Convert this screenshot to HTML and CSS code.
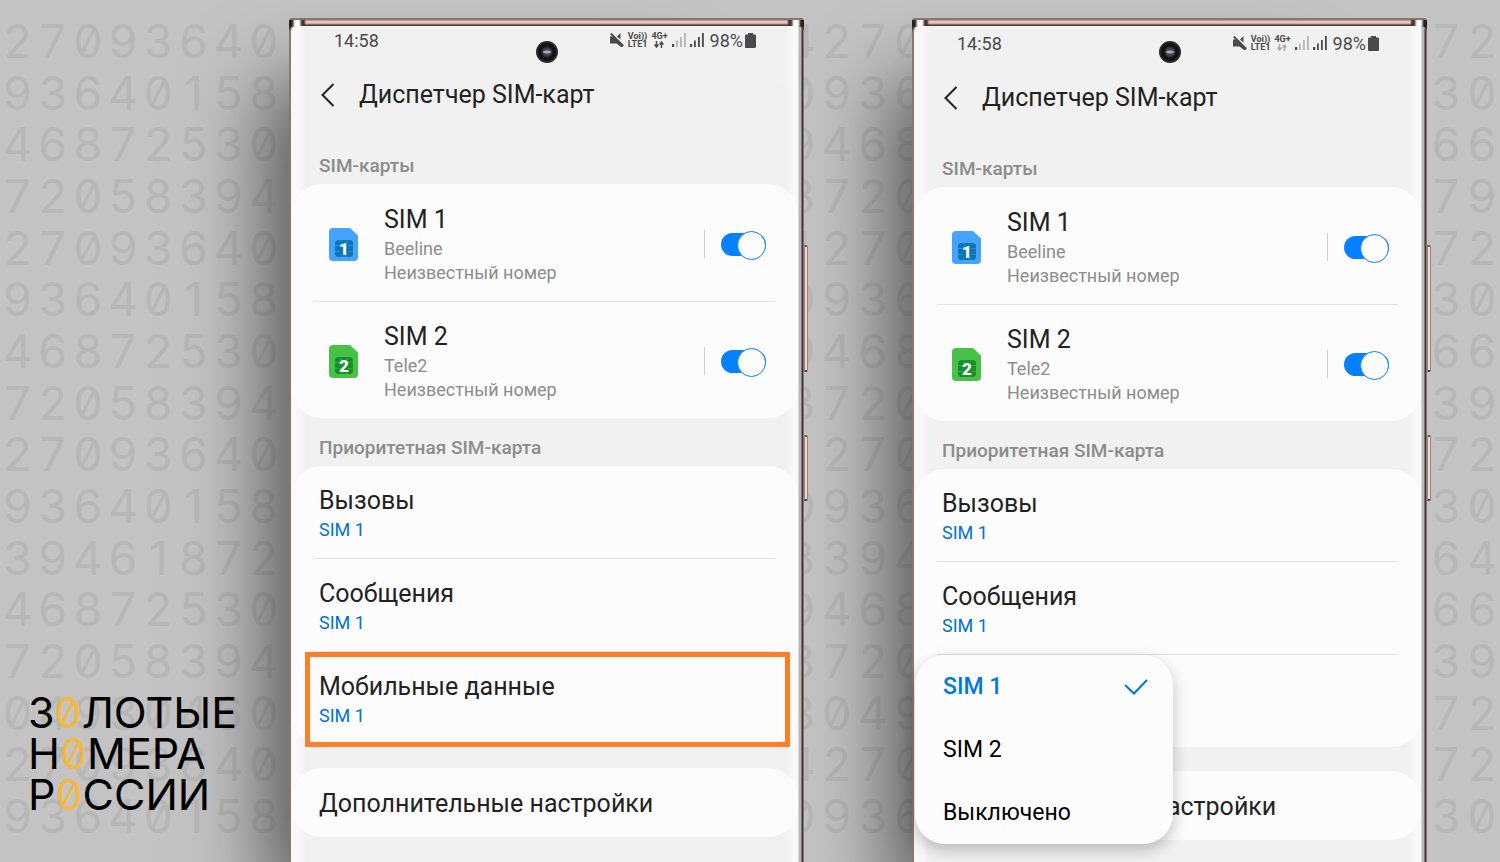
FILE: index.html
```html
<!DOCTYPE html>
<html lang="ru">
<head>
  <meta charset="UTF-8">
  <meta name="viewport" content="width=device-width, initial-scale=1.0">
  <title>Диспетчер SIM-карт</title>
  <link rel="stylesheet" href="styles.css">
</head>
<body>
  <!-- Shared icons -->
  <svg class="defs" aria-hidden="true">
    <symbol id="mute" viewBox="0 0 14 14">
      <path d="M0 3.500h3L12.500 12v2H11L6.500 10.500H0zM7 3.500L10.500 0v6.500z" fill="currentColor"/>
      <path d="M0.800 0.500L13.300 13" stroke="currentColor" stroke-width="1.900"/>
    </symbol>
    <symbol id="signal" viewBox="0 0 14 14">
      <path d="M0 11h2.200V14H0z"/>
      <path class="bars" d="M4 7.500h1.800V14H4zM8 4h1.800V14H8zM12 0h1.800v14H12z"/>
    </symbol>
    <symbol id="arrows" viewBox="0 0 10 7">
      <path d="M2.500 0v5.500M0.500 3.500l2 2.500 2-2.500M7.500 7V1.500M5.500 3.500l2-2.500 2 2.500" fill="none" stroke="currentColor" stroke-width="1.500"/>
    </symbol>
    <symbol id="battery" viewBox="0 0 11 15">
      <path d="M3 0h5v1.500h2q1 0 1 1V14q0 1-1 1H1q-1 0-1-1V2.500q0-1 1-1h2z" fill="currentColor"/>
    </symbol>
    <symbol id="back" viewBox="0 0 14 24">
      <path d="M12.500 1L1.500 12l11 11" fill="none" stroke="#222" stroke-width="2"/>
    </symbol>
    <symbol id="sim" viewBox="0 0 29 33">
      <path d="M4 0h17l8 7.500V29q0 4-4 4H4q-4 0-4-4V4q0-4 4-4z" fill="currentColor"/>
      <rect class="chip" x="6" y="12" width="18" height="17" rx="3.500"/>
      <path d="M6 17.500h5M6 23.500h5M19 17.500h5M19 23.500h5M12 12v3M18 12v3M12 26v3M18 26v3" stroke="currentColor" stroke-width="0.500"/>
    </symbol>
  </svg>

  <div class="digits" aria-hidden="true">
    <div class="strip strip-left" data-rows="27093640 93640158 46872530 72058394 27093640 93640158 46872530 72058394 27093640 93640158 39461872 46872530 72058394 04930460 27093640 93640158"></div>
    <div class="strip strip-middle" data-rows="4270 0936 9468 8720 1270 0936 9468 8720 1270 0936 8394 9468 8720 3049 4270 0936"></div>
    <div class="strip strip-right" data-rows="72 30 66 79 72 30 66 39 72 30 64 66 39 72 72 30"></div>
  </div>

  <main class="stage">
    <p class="logo">З<b>0</b>ЛОТЫЕ<br>Н<b>0</b>МЕРА<br>Р<b>0</b>ССИИ</p>

    <section class="phone phone-first">
      <div class="frame-top"></div>
      <div class="camera"></div>
      <div class="screen">
        <div class="status">
          <span class="time">14:58</span>
          <svg class="icon-mute"><use href="#mute"/></svg>
          <span class="tiny">Voi))<br>LTE1</span>
          <span class="tiny">4G+<svg class="icon-arrows"><use href="#arrows"/></svg></span>
          <svg class="icon-signal weak"><use href="#signal"/></svg>
          <svg class="icon-signal"><use href="#signal"/></svg>
          <span class="charge">98%<svg class="icon-battery"><use href="#battery"/></svg></span>
        </div>
        <header class="title-bar">
          <button class="back" aria-label="Назад"><svg><use href="#back"/></svg></button>
          <h1>Диспетчер SIM-карт</h1>
        </header>

        <h2>SIM-карты</h2>
        <div class="card">
          <div class="row sim-row">
            <span class="sim-icon blue"><svg><use href="#sim"/></svg><b>1</b></span>
            <label class="sim-text" for="a-sim1">
              <span class="name">SIM 1</span>
              <span class="sub">Beeline</span>
              <span class="sub">Неизвестный номер</span>
            </label>
            <span class="line"></span>
            <input type="checkbox" class="toggle" id="a-sim1" checked>
          </div>
          <div class="row sim-row">
            <span class="sim-icon green"><svg><use href="#sim"/></svg><b>2</b></span>
            <label class="sim-text" for="a-sim2">
              <span class="name">SIM 2</span>
              <span class="sub">Tele2</span>
              <span class="sub">Неизвестный номер</span>
            </label>
            <span class="line"></span>
            <input type="checkbox" class="toggle" id="a-sim2" checked>
          </div>
        </div>

        <h2>Приоритетная SIM-карта</h2>
        <div class="card">
          <button class="row"><span class="name">Вызовы</span><span class="value">SIM 1</span></button>
          <button class="row"><span class="name">Сообщения</span><span class="value">SIM 1</span></button>
          <button class="row marked"><span class="name">Мобильные данные</span><span class="value">SIM 1</span></button>
        </div>

        <div class="card more">
          <button class="row"><span class="name">Дополнительные настройки</span></button>
        </div>
      </div>
      <i class="key key-volume"></i>
      <i class="key key-power"></i>
    </section>

    <section class="phone phone-second">
      <div class="frame-top"></div>
      <div class="camera"></div>
      <div class="screen">
        <div class="status">
          <span class="time">14:58</span>
          <svg class="icon-mute"><use href="#mute"/></svg>
          <span class="tiny">Voi))<br>LTE1</span>
          <span class="tiny">4G+<svg class="icon-arrows idle"><use href="#arrows"/></svg></span>
          <svg class="icon-signal weak"><use href="#signal"/></svg>
          <svg class="icon-signal"><use href="#signal"/></svg>
          <span class="charge">98%<svg class="icon-battery"><use href="#battery"/></svg></span>
        </div>
        <header class="title-bar">
          <button class="back" aria-label="Назад"><svg><use href="#back"/></svg></button>
          <h1>Диспетчер SIM-карт</h1>
        </header>

        <h2>SIM-карты</h2>
        <div class="card">
          <div class="row sim-row">
            <span class="sim-icon blue"><svg><use href="#sim"/></svg><b>1</b></span>
            <label class="sim-text" for="b-sim1">
              <span class="name">SIM 1</span>
              <span class="sub">Beeline</span>
              <span class="sub">Неизвестный номер</span>
            </label>
            <span class="line"></span>
            <input type="checkbox" class="toggle" id="b-sim1" checked>
          </div>
          <div class="row sim-row">
            <span class="sim-icon green"><svg><use href="#sim"/></svg><b>2</b></span>
            <label class="sim-text" for="b-sim2">
              <span class="name">SIM 2</span>
              <span class="sub">Tele2</span>
              <span class="sub">Неизвестный номер</span>
            </label>
            <span class="line"></span>
            <input type="checkbox" class="toggle" id="b-sim2" checked>
          </div>
        </div>

        <h2>Приоритетная SIM-карта</h2>
        <div class="card">
          <button class="row"><span class="name">Вызовы</span><span class="value">SIM 1</span></button>
          <button class="row"><span class="name">Сообщения</span><span class="value">SIM 1</span></button>
          <div class="menu-anchor">
            <button class="row empty" aria-label="Мобильные данные"></button>
            <div class="menu" role="listbox">
              <button class="selected" role="option" aria-selected="true">SIM 1
                <svg viewBox="0 0 24 16"><path d="M1 6l9 8.500L23 1" fill="none" stroke="currentColor" stroke-width="2"/></svg>
              </button>
              <button role="option">SIM 2</button>
              <button role="option">Выключено</button>
            </div>
          </div>
        </div>

        <div class="card more">
          <button class="row"><span class="name">Дополнительные настройки</span></button>
        </div>
      </div>
      <i class="key key-volume"></i>
      <i class="key key-power"></i>
    </section>
  </main>

  <script>
    // Fill the background strips, one cell per digit
    document.querySelectorAll('.strip').forEach(strip => {
      strip.dataset.rows.split(' ').join('').split('').forEach(digit => {
        const cell = document.createElement('span');
        cell.textContent = digit;
        strip.appendChild(cell);
      });
    });
  </script>
</body>
</html>
```
FILE: styles.css
```css
* {
  box-sizing: border-box;
}

body {
  margin: 0;
  position: relative;
  min-height: 100vh;
  background-color: #c3c3c3;
  font-family: Roboto, "Liberation Sans", sans-serif;
  color: #222;
}

button {
  margin: 0;
  padding: 0;
  border: none;
  background: none;
  font-family: inherit;
  color: inherit;
  text-align: left;
  cursor: pointer;
}

.defs {
  position: absolute;
  width: 0;
  height: 0;
}

.stage, .digits {
  display: grid;
  grid-template-columns: 289fr 515fr 108fr 515fr 73fr;
}

.stage {
  position: relative;
  min-height: 100vh;
  overflow: hidden;
}

/* Background digits */
.digits {
  position: absolute;
  inset: 0;
  padding: 15px 0 20px;
  overflow: hidden;
  color: #b7b7b7;
  font-family: Inter, "Liberation Sans", sans-serif;
  font-feature-settings: "zero";
  font-size: 46px;
  line-height: 1;
}

.strip {
  display: grid;
  grid-auto-rows: 1fr;
  place-items: center;
  justify-content: center;
}

.strip-left {
  grid-column: 1;
  grid-template-columns: repeat(8, 1fr);
  justify-content: stretch;
}

.strip-middle {
  grid-column: 3;
  grid-template-columns: repeat(4, 36px);
}

.strip-right {
  grid-column: 5;
  grid-template-columns: repeat(2, 36px);
}

.logo {
  grid-column: 1;
  align-self: end;
  margin: 0 0 47px 28px;
  font-family: Inter, "Liberation Sans", sans-serif;
  font-feature-settings: "zero";
  font-size: 43px;
  line-height: 41px;
  color: #000;
  white-space: nowrap;
}

.logo b {
  font-weight: 400;
  color: #f2b844;
}

/* Phone body */
.phone {
  position: relative;
  display: flex;
  flex-direction: column;
  margin-top: 18px;
  border-radius: 4px 4px 0 0;
  background-color: #3a3030;
}

.phone-first {
  grid-column: 2;
}

.phone-second {
  grid-column: 4;
}

.phone::before {
  content: "";
  position: absolute;
  inset: 24px 120px 0 0;
  box-shadow: -22px 40px 76px rgba(0, 0, 0, 0.56);
}

.frame-top {
  position: relative;
  height: 8px;
  border-radius: 4px 4px 0 0;
  background:
    linear-gradient(90deg, #222 0 3px, #fff 6px 10px, #433 13px 15px, transparent 17px calc(100% - 17px), #433 calc(100% - 15px) calc(100% - 13px), #fff calc(100% - 10px) calc(100% - 6px), #222 calc(100% - 3px)) 0 2px / 100% 6px no-repeat,
    linear-gradient(#8d736d 0 2px, #e3c6bd 3px 5px, #b4948c 6px, #4b3f3e 7px);
}

.camera {
  position: absolute;
  z-index: 1;
  top: 23px;
  left: 50%;
  width: 22px;
  height: 22px;
  margin-left: -11px;
  border-radius: 50%;
  background: radial-gradient(ellipse 5px 2px at 50% 50%, #aab 0 50%, transparent), radial-gradient(circle, #433f50 0 4px, #111 6px 8px, #2c2a30 10px);
}

.screen {
  position: relative;
  flex: 1;
  border-style: solid;
  border-width: 0 1px 0 2px;
  border-color: #8a7672;
  border-radius: 6px 6px 0 0;
  padding: 0 5px 0 1px;
  background: linear-gradient(90deg, #f8f8f8 0 8px, #f1f1f1 15px calc(100% - 18px), #f9f9f9 calc(100% - 10px) calc(100% - 5px), #b9b9b9 calc(100% - 4px) calc(100% - 2px), #3d3535 calc(100% - 1px));
}

.phone-second .screen {
  padding-top: 3px;
}

.key {
  position: absolute;
  left: 100%;
  width: 4px;
  border: 1px solid #a58078;
  border-top: 2px solid #6d5a56;
  border-bottom: 2px solid #4b3f3e;
  border-radius: 0 2px 2px 0;
  background-color: #ecd9d3;
}

.key-volume {
  top: 227px;
  height: 127px;
}

.key-power {
  top: 417px;
  height: 66px;
}

/* Status bar */
.status {
  display: flex;
  align-items: center;
  gap: 4px;
  height: 28px;
  padding: 0 42px;
  font-size: 18px;
  color: #4a4a4a;
}

.time {
  margin-right: auto;
}

.status svg {
  display: block;
  flex: none;
}

.icon-mute, .icon-signal {
  width: 14px;
  height: 14px;
}

.icon-signal {
  fill: #4a4a4a;
}

.weak {
  --bars: #b5b5b5;
}

.bars {
  fill: var(--bars, #4a4a4a);
}

.tiny {
  font-size: 9px;
  line-height: 8px;
  font-weight: 700;
  text-align: center;
}

.icon-arrows {
  width: 10px;
  height: 7px;
  margin: 1px auto 0;
}

.idle {
  color: #aaa;
}

.charge {
  display: flex;
  align-items: center;
  gap: 2px;
  margin-left: 2px;
}

.icon-battery {
  width: 11px;
  height: 15px;
}

.title-bar {
  display: flex;
  align-items: center;
  gap: 24px;
  height: 82px;
  padding-left: 29px;
}

.back svg {
  display: block;
  width: 14px;
  height: 24px;
}

h1 {
  margin: 0;
  font-size: 25px;
  line-height: 34px;
  font-weight: 400;
}

h2 {
  margin: 0;
  padding: 18px 27px 6px;
  font-size: 19px;
  line-height: 24px;
  font-weight: 500;
  color: #8c8c8c;
}

/* Cards */
.card {
  border-radius: 30px;
  background-color: #fcfcfc;
}

.more {
  margin-top: 24px;
}

.row {
  position: relative;
  display: block;
  width: calc(100% - 45px);
  margin: 0 23px 0 22px;
  padding: 18px 5px 16px;
  border-bottom: 1px solid #e2e2e2;
}

.row:last-child, .menu-anchor .row {
  border-bottom: none;
}

.empty {
  height: 92px;
}

.name, .sub, .value {
  display: block;
  font-size: 18px;
  line-height: 24px;
}

.name {
  font-size: 25px;
  line-height: 34px;
}

.sub {
  color: #8c8c8c;
}

.value {
  color: #0072d2;
}

.more .row {
  padding-top: 19px;
}

.sim-row {
  display: flex;
  align-items: center;
  padding: 19px 9px 16px 15px;
}

.sim-row:last-child {
  padding-top: 18px;
}

.sim-icon {
  position: relative;
  width: 29px;
  height: 33px;
  margin-right: 26px;
}

.sim-icon svg {
  display: block;
  width: 29px;
  height: 33px;
}

.sim-icon b {
  position: absolute;
  inset: 12px 0 0 1px;
  font-size: 17px;
  line-height: 18px;
  font-weight: 900;
  text-align: center;
  color: #fff;
}

.blue {
  color: #45a2ff;
  --chip: #0a76b4;
}

.green {
  color: #47c147;
  --chip: #12912a;
}

.chip {
  fill: var(--chip);
}

.sim-text {
  flex: 1;
}

.line {
  width: 1px;
  height: 28px;
  margin-right: 16px;
  background-color: #cfcfcf;
}

.toggle {
  appearance: none;
  position: relative;
  width: 45px;
  height: 23px;
  margin: 0;
  border-radius: 12px;
  background-color: #b5b5b5;
  cursor: pointer;
}

.toggle::after {
  content: "";
  position: absolute;
  top: -2px;
  left: 0;
  width: 27px;
  height: 27px;
  border: 1px solid #b5b5b5;
  border-radius: 50%;
  background-color: #fcfcfc;
}

.toggle:checked {
  background-color: #0580ff;
}

.toggle:checked::after {
  left: auto;
  right: 0;
  border-color: #0580ff;
}

.marked::after {
  content: "";
  position: absolute;
  inset: 0 -15px -3px -9px;
  border: 5px solid #ff7f27;
}

/* Drop-down over the last rows */
.menu-anchor {
  position: relative;
}

.menu {
  position: absolute;
  z-index: 2;
  top: 0;
  left: 0;
  width: 258px;
  border-radius: 30px;
  background-color: #fcfcfc;
  box-shadow: 0 6px 16px rgba(0, 0, 0, 0.24);
}

.menu button {
  display: flex;
  align-items: center;
  justify-content: space-between;
  width: 100%;
  height: 63px;
  padding: 0 25px 0 28px;
  font-size: 23px;
  color: #000;
}

.menu .selected {
  font-weight: 500;
  color: #0078e0;
}

.menu svg {
  width: 24px;
  height: 16px;
}
```
